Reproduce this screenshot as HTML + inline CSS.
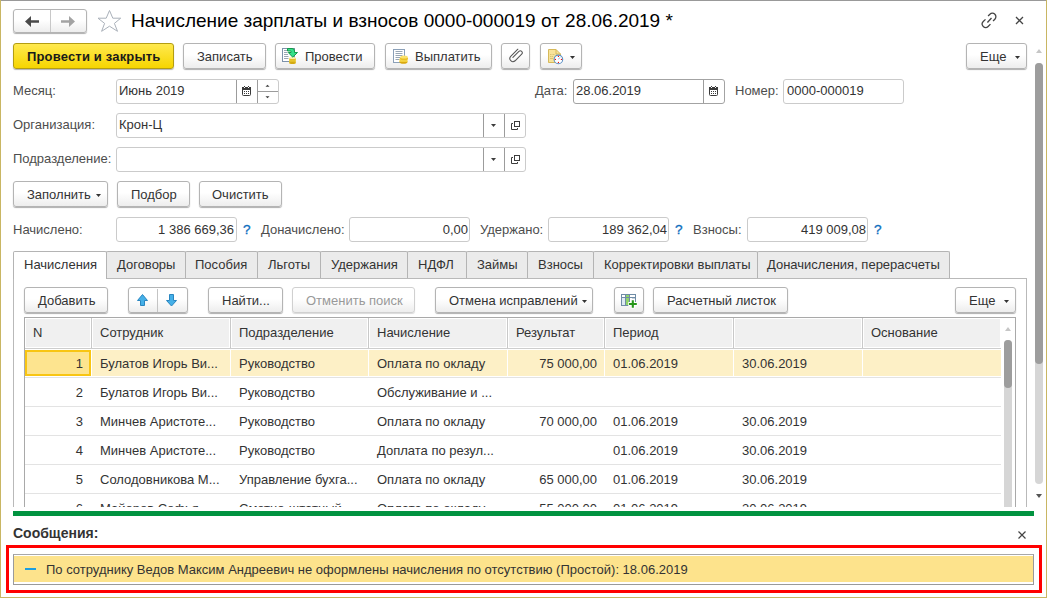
<!DOCTYPE html>
<html><head><meta charset="utf-8">
<style>
*{box-sizing:border-box}
html,body{margin:0;padding:0}
body{width:1047px;height:598px;position:relative;overflow:hidden;background:#fff;font-family:"Liberation Sans",sans-serif;font-size:13px;color:#4d4d4d}
.a{position:absolute}
svg.a{z-index:5}
.t{position:absolute;white-space:nowrap;line-height:15px}
.d{color:#333}
.btn{position:absolute;border:1px solid #b4b4b4;border-radius:3px;background:linear-gradient(#fff 0,#fff 45%,#ededed 100%);box-shadow:0 1px 1px rgba(0,0,0,.32)}
.fld{position:absolute;border:1px solid #cbcbcb;border-radius:3px;background:#fff;height:25px}
.vl{position:absolute;width:1px;background:#9c9c9c}
.tab{position:absolute;top:251px;height:27px;border:1px solid #b4b4b4;border-bottom:none;background:#ebebeb;border-radius:2px 2px 0 0}
.q{position:absolute;white-space:nowrap;line-height:15px;color:#0b6cbd;font-size:13.6px;-webkit-text-stroke:0.3px #0b6cbd}
.hd{position:absolute;top:318px;height:30px;width:1px;background:#cfcfcf;box-shadow:1px 0 0 #fff}
.rs{position:absolute;left:25px;width:976px;height:1px;background:#e3e3e3}
.r{text-align:right}
</style></head><body>
<!-- frame -->
<div class="a" style="left:0;top:0;width:1047px;height:1px;background:#999"></div>
<div class="a" style="left:0;top:0;width:1px;height:598px;background:#c9b663"></div>
<div class="a" style="left:1046px;top:0;width:1px;height:598px;background:#c9b663"></div>
<div class="a" style="left:0;top:597px;width:1047px;height:1px;background:#c9b663"></div>

<!-- nav buttons -->
<div class="btn" style="left:13px;top:9px;width:74px;height:24px"></div>
<div class="a" style="left:50px;top:10px;width:1px;height:22px;background:#c8c8c8"></div>
<svg class="a" style="left:0;top:0" width="130" height="40">
 <path d="M25 21.5 L31 16 L31 20.3 L39 20.3 L39 22.7 L31 22.7 L31 27 Z" fill="#4a4a4a"/>
 <path d="M75 21.5 L69 16 L69 20.3 L61 20.3 L61 22.7 L69 22.7 L69 27 Z" fill="#a3a3a3"/>
 <path d="M109.5 10.5 L112.8 18.2 L120.7 18.2 L114.4 23.4 L117.5 31.3 L109.5 26.2 L101.6 31.3 L104.6 23.4 L98 18.2 L106.2 18.2 Z" fill="none" stroke="#aab1ba" stroke-width="1"/>
</svg>
<div class="t" style="left:131px;top:10px;font-size:19px;line-height:22px;color:#000">Начисление зарплаты и взносов 0000-000019 от 28.06.2019 *</div>
<svg class="a" style="left:975px;top:8px" width="60" height="24">
 <g fill="none" stroke="#444" stroke-width="1.3">
  <path d="M13.08 8.07 L14.92 6.22 A3.5 3.5 0 0 1 19.87 11.17 L18.03 13.02"/>
  <path d="M10.49 11.34 L8.26 13.56 A3.45 3.45 0 0 0 13.14 18.44 L15.44 16.14"/>
  <path d="M16.5 10 L12.4 14.5"/>
  <path d="M41 9 L48 16 M48 9 L41 16"/>
 </g>
</svg>

<!-- main toolbar -->
<div class="a" style="left:13px;top:43px;width:161px;height:26px;border:1px solid #b39d12;border-radius:3px;background:linear-gradient(#ffe94f,#f6d500);box-shadow:0 1px 1px rgba(0,0,0,.3)"></div>
<div class="t" style="left:27px;top:49px;font-weight:bold;color:#1a1a1a;letter-spacing:0.17px">Провести и закрыть</div>
<div class="btn" style="left:183px;top:43px;width:83px;height:26px"></div>
<div class="t d" style="left:197px;top:49px">Записать</div>
<div class="btn" style="left:275px;top:43px;width:100px;height:26px"></div>
<div class="t d" style="left:305px;top:49px">Провести</div>
<div class="btn" style="left:385px;top:43px;width:107px;height:26px"></div>
<div class="t d" style="left:415px;top:49px">Выплатить</div>
<div class="btn" style="left:501px;top:43px;width:29px;height:26px"></div>
<div class="btn" style="left:540px;top:43px;width:42px;height:26px"></div>
<div class="btn" style="left:966px;top:43px;width:61px;height:26px"></div>
<div class="t d" style="left:980px;top:49px">Еще</div>
<svg class="a" style="left:0;top:0" width="1047" height="80">
 <!-- provesti icon -->
 <rect x="282.5" y="48.5" width="12" height="13" fill="#fff" stroke="#7d92aa"/>
 <path d="M284 50.5h3M284 52.5h3.5M284 54.5h4M284 56.5h4.5M284 58.5h4.5" stroke="#9aa6b4" stroke-width="1"/>
 <rect x="289.2" y="58" width="6.6" height="5" fill="#f1d03a"/>
 <ellipse cx="292.5" cy="63" rx="3.3" ry="1" fill="#d4aa14"/>
 <ellipse cx="292.5" cy="58" rx="3.3" ry="1.1" fill="#fdf1a6"/>
 <path d="M289.3 59.9h6.4M289.3 61.9h6.4" stroke="#cfa510" stroke-width=".7"/>
 <path d="M287.5 48.5 L292 48.5 Q294.5 48.5 294.5 51 L294.5 52.5 L297.5 52.5 L292.7 57.2 L288.3 52.5 L291 52.5 L291 51.5 Q291 51 290.5 51 L287.5 51 Z" fill="#36e08a" stroke="#169a4a" stroke-width="1" stroke-linejoin="round"/>
 <!-- vyplatit icon -->
 <rect x="393.5" y="49.5" width="11" height="13" fill="#fff" stroke="#8ba0b8"/>
 <path d="M395.5 51.5h7M395.5 53.5h7M395.5 55.5h7M395.5 57.5h5M395.5 59.5h4" stroke="#98a6b4" stroke-width="1"/>
 <ellipse cx="403.5" cy="62" rx="4" ry="1.8" fill="#d9a80f"/>
 <rect x="399.5" y="59" width="8" height="3" fill="#f2cf3a"/>
 <ellipse cx="403.5" cy="59" rx="4" ry="1.8" fill="#f7dc57"/>
 <ellipse cx="404" cy="58.5" rx="4" ry="1.8" fill="#e9bf22"/>
 <ellipse cx="404" cy="57" rx="3.8" ry="1.6" fill="#fbe26a"/>
 <!-- clip -->
 <path d="M517.85 49.23 L510.71 56.38 A3.1 3.1 0 0 0 515.09 60.76 L521.67 54.18 A1.95 1.95 0 0 0 518.91 51.42 L512.9 57.4" fill="none" stroke="#555" stroke-width="1.05" stroke-linecap="round"/>
 <!-- report icon -->
 <path d="M548.5 49.5 L556 49.5 L560.5 54 L560.5 62.5 L548.5 62.5 Z" fill="#f7e39a" stroke="#d6b95a"/>
 <path d="M556 49.5 L556 54 L560.5 54" fill="none" stroke="#d6b95a"/>
 <path d="M550 54.5h1.5M552.5 54.5h2M550 56.5h1M551.5 56.5h1.5M550 58.5h3" stroke="#d2bb6c" stroke-width=".8"/>
 <circle cx="558.4" cy="59.4" r="4.3" fill="#fff" stroke="#5b8fc4" stroke-width="1.1"/>
 <circle cx="558.4" cy="56.4" r=".6" fill="#e00"/><circle cx="558.4" cy="62.4" r=".6" fill="#e00"/>
 <circle cx="555.4" cy="59.4" r=".6" fill="#e00"/><circle cx="561.4" cy="59.4" r=".6" fill="#e00"/>
 <path d="M558.4 59.4 L560 57.4" stroke="#8fb3d8" stroke-width="1"/>
 <path d="M570 56 L575 56 L572.5 59 Z" fill="#333"/>
 <path d="M1015 56 L1020 56 L1017.5 59 Z" fill="#333"/>
</svg>

<!-- outer scrollbar -->
<div class="a" style="left:1035px;top:63px;width:8px;height:421px;border-radius:4px;background:#d6d6d6"></div>
<div class="a" style="left:1035px;top:63px;width:8px;height:301px;border-radius:4px;background:#9d9d9d"></div>
<svg class="a" style="left:1030px;top:45px" width="17" height="460">
 <path d="M6 8 L12 8 L9 4 Z" fill="#c6c6c6"/>
 <path d="M6 449 L12 449 L9 453 Z" fill="#555"/>
</svg>

<!-- fields row 1 -->
<div class="t" style="left:13px;top:83px">Месяц:</div>
<div class="fld" style="left:116px;top:79px;width:163px"></div>
<div class="vl" style="left:236px;top:80px;height:23px"></div>
<div class="vl" style="left:257px;top:80px;height:23px"></div>
<div class="a" style="left:257px;top:91px;width:21px;height:1px;background:#9c9c9c"></div>
<div class="t d" style="left:119px;top:83px">Июнь 2019</div>
<div class="t" style="left:535px;top:83px">Дата:</div>
<div class="fld" style="left:573px;top:79px;width:152px;border-color:#a3a3a3"></div>
<div class="vl" style="left:703px;top:80px;height:23px"></div>
<div class="t d" style="left:576px;top:83px">28.06.2019</div>
<div class="t" style="left:735px;top:83px">Номер:</div>
<div class="fld" style="left:783px;top:79px;width:121px"></div>
<div class="t d" style="left:787px;top:83px">0000-000019</div>
<svg class="a" style="left:0;top:0" width="1047" height="180">
 <!-- calendar icons -->
 <g id="cal" fill="#3a3a3a">
 <rect x="242.5" y="87.5" width="8" height="8" rx="1" fill="#fff" stroke="#3a3a3a" stroke-width="1"/>
 <rect x="242" y="87" width="9" height="3"/>
 <rect x="244" y="87" width="1" height="1" fill="#fff"/><rect x="248" y="87" width="1" height="1" fill="#fff"/>
 <rect x="244" y="86" width="1" height="1"/><rect x="248" y="86" width="1" height="1"/>
 <rect x="244" y="91" width="1" height="1"/><rect x="246" y="91" width="1" height="1"/><rect x="248" y="91" width="1" height="1"/>
 <rect x="244" y="93" width="1" height="1"/><rect x="246" y="93" width="1" height="1"/><rect x="248" y="93" width="1" height="1"/>
 </g>
 <use href="#cal" x="467" y="0"/>
 <path d="M265.5 86.8 L269.5 86.8 L267.5 84.8 Z" fill="#3c3c3c"/>
 <path d="M265.5 96.2 L269.5 96.2 L267.5 98.2 Z" fill="#3c3c3c"/>
 <!-- dropdown + open icons -->
 <path d="M491 124 L496 124 L493.5 127 Z" fill="#3c3c3c"/>
 <path d="M491 158 L496 158 L493.5 161 Z" fill="#3c3c3c"/>
 <g id="opn" fill="none" stroke="#3c3c3c" stroke-width="1">
  <rect x="514.5" y="121.5" width="5" height="5"/>
  <path d="M513 123.5 L511.5 123.5 L511.5 129.5 L517.5 129.5 L517.5 128"/>
 </g>
 <use href="#opn" x="0" y="34"/>
</svg>

<!-- row 2,3 -->
<div class="t" style="left:13px;top:117px">Организация:</div>
<div class="fld" style="left:116px;top:113px;width:410px"></div>
<div class="vl" style="left:483px;top:114px;height:23px"></div>
<div class="vl" style="left:504px;top:114px;height:23px"></div>
<div class="t d" style="left:119px;top:117px">Крон-Ц</div>
<div class="t" style="left:13px;top:151px">Подразделение:</div>
<div class="fld" style="left:116px;top:147px;width:410px"></div>
<div class="vl" style="left:483px;top:148px;height:23px"></div>
<div class="vl" style="left:504px;top:148px;height:23px"></div>

<!-- fill buttons -->
<div class="btn" style="left:13px;top:181px;width:95px;height:26px"></div>
<div class="t d" style="left:27px;top:187px">Заполнить</div>
<svg class="a" style="left:96px;top:194px" width="8" height="5"><path d="M0 0 L5 0 L2.5 3 Z" fill="#333"/></svg>
<div class="btn" style="left:117px;top:181px;width:73px;height:26px"></div>
<div class="t d" style="left:131px;top:187px">Подбор</div>
<div class="btn" style="left:199px;top:181px;width:83px;height:26px"></div>
<div class="t d" style="left:212px;top:187px">Очистить</div>

<!-- totals -->
<div class="t" style="left:13px;top:222px">Начислено:</div>
<div class="fld" style="left:116px;top:217px;width:121px"></div>
<div class="t d r" style="left:120px;top:222px;width:114px">1 386 669,36</div>
<div class="q" style="left:243px;top:222px">?</div>
<div class="t" style="left:261px;top:222px">Доначислено:</div>
<div class="fld" style="left:349px;top:217px;width:121px"></div>
<div class="t d r" style="left:353px;top:222px;width:115px">0,00</div>
<div class="t" style="left:480px;top:222px">Удержано:</div>
<div class="fld" style="left:548px;top:217px;width:121px"></div>
<div class="t d r" style="left:552px;top:222px;width:115px">189 362,04</div>
<div class="q" style="left:675px;top:222px">?</div>
<div class="t" style="left:693px;top:222px">Взносы:</div>
<div class="fld" style="left:747px;top:217px;width:121px"></div>
<div class="t d r" style="left:751px;top:222px;width:115px">419 009,08</div>
<div class="q" style="left:874px;top:222px">?</div>

<!-- tabs -->
<div class="a" style="left:13px;top:278px;width:1014px;height:229px;border:1px solid #b9b9b9;border-bottom:none"></div>
<div class="tab" style="left:106px;width:80px"></div>
<div class="tab" style="left:185px;width:73px"></div>
<div class="tab" style="left:257px;width:64px"></div>
<div class="tab" style="left:320px;width:88px"></div>
<div class="tab" style="left:407px;width:60px"></div>
<div class="tab" style="left:466px;width:62px"></div>
<div class="tab" style="left:527px;width:67px"></div>
<div class="tab" style="left:593px;width:165px"></div>
<div class="tab" style="left:757px;width:193px"></div>
<div class="a" style="left:13px;top:251px;width:94px;height:28px;border:1px solid #b4b4b4;border-bottom:none;border-radius:2px 2px 0 0;background:#fff"></div>
<div class="t d" style="left:24px;top:257px">Начисления</div>
<div class="t d" style="left:117px;top:257px">Договоры</div>
<div class="t d" style="left:195px;top:257px">Пособия</div>
<div class="t d" style="left:268px;top:257px">Льготы</div>
<div class="t d" style="left:331px;top:257px">Удержания</div>
<div class="t d" style="left:418px;top:257px">НДФЛ</div>
<div class="t d" style="left:477px;top:257px">Займы</div>
<div class="t d" style="left:538px;top:257px">Взносы</div>
<div class="t d" style="left:604px;top:257px">Корректировки выплаты</div>
<div class="t d" style="left:767px;top:257px">Доначисления, перерасчеты</div>

<!-- table toolbar -->
<div class="btn" style="left:24px;top:287px;width:84px;height:26px"></div>
<div class="t d" style="left:38px;top:293px">Добавить</div>
<div class="btn" style="left:128px;top:287px;width:60px;height:26px"></div>
<div class="a" style="left:157px;top:289px;width:1px;height:23px;background:#c4c4c4"></div>
<div class="btn" style="left:208px;top:287px;width:75px;height:26px"></div>
<div class="t d" style="left:222px;top:293px">Найти...</div>
<div class="btn" style="left:292px;top:287px;width:123px;height:26px;border-color:#d0d0d0;box-shadow:0 1px 1px rgba(0,0,0,.15)"></div>
<div class="t" style="left:306px;top:293px;color:#999">Отменить поиск</div>
<div class="btn" style="left:435px;top:287px;width:158px;height:26px"></div>
<div class="t d" style="left:449px;top:293px">Отмена исправлений</div>
<div class="btn" style="left:614px;top:287px;width:30px;height:26px"></div>
<div class="btn" style="left:653px;top:287px;width:135px;height:26px"></div>
<div class="t d" style="left:667px;top:293px">Расчетный листок</div>
<div class="btn" style="left:955px;top:287px;width:61px;height:26px"></div>
<div class="t d" style="left:969px;top:293px">Еще</div>
<svg class="a" style="left:0;top:280px" width="1047" height="40">
 <path d="M137.5 20.5 L142.5 14.5 L147.5 20.5 L144.5 20.5 L144.5 25.5 L140.5 25.5 L140.5 20.5 Z" fill="#45b0e8" stroke="#2a86c0" stroke-width="1"/>
 <path d="M166.5 20.5 L171.5 26 L176.5 20.5 L173.5 20.5 L173.5 14.5 L169.5 14.5 L169.5 20.5 Z" fill="#45b0e8" stroke="#2a86c0" stroke-width="1"/>
 <path d="M582 20 L587 20 L584.5 23 Z" fill="#333"/>
 <path d="M1004 20 L1009 20 L1006.5 23 Z" fill="#333"/>
 <!-- table add icon -->
 <rect x="621.5" y="14.5" width="14" height="11" fill="#fff" stroke="#6f8ca6"/>
 <rect x="622" y="18" width="3" height="7" fill="#dde9f3"/>
 <rect x="626" y="15" width="3" height="10" fill="#8fd46a"/>
 <path d="M622 17.5h13M625.5 15v10M629.5 15v10" stroke="#6f8ca6"/>
 <path d="M632 18.5h3" stroke="#c8d4de"/>
 <path d="M628.3 24h9M632.8 19.5v9" stroke="#fff" stroke-width="4"/>
 <path d="M629 24h7.8M632.8 20.2v7.6" stroke="#25961a" stroke-width="2.1"/>
</svg>

<!-- table -->
<div class="a" style="left:24px;top:317px;width:992px;height:190px;border:1px solid #a9a9a9;border-bottom:none"></div>
<div class="a" style="left:25px;top:318px;width:976px;height:30px;background:#f0f0f0;box-shadow:inset 0 0 0 1px #fff"></div>
<div class="a" style="left:1000px;top:318px;width:1px;height:30px;background:#fff"></div>
<div class="a" style="left:90px;top:318px;width:3px;height:30px;background:#c9c9c9;border-left:1px solid #fff;border-right:1px solid #fff"></div>
<div class="a" style="left:229px;top:318px;width:3px;height:30px;background:#c9c9c9;border-left:1px solid #fff;border-right:1px solid #fff"></div>
<div class="a" style="left:367px;top:318px;width:3px;height:30px;background:#c9c9c9;border-left:1px solid #fff;border-right:1px solid #fff"></div>
<div class="a" style="left:506px;top:318px;width:3px;height:30px;background:#c9c9c9;border-left:1px solid #fff;border-right:1px solid #fff"></div>
<div class="a" style="left:603px;top:318px;width:3px;height:30px;background:#c9c9c9;border-left:1px solid #fff;border-right:1px solid #fff"></div>
<div class="a" style="left:732px;top:318px;width:3px;height:30px;background:#c9c9c9;border-left:1px solid #fff;border-right:1px solid #fff"></div>
<div class="a" style="left:861px;top:318px;width:3px;height:30px;background:#c9c9c9;border-left:1px solid #fff;border-right:1px solid #fff"></div>
<div class="a" style="left:25px;top:348px;width:976px;height:1px;background:#cdcdcd"></div>
<div class="t d" style="left:33px;top:325px">N</div>
<div class="t d" style="left:100px;top:325px">Сотрудник</div>
<div class="t d" style="left:239px;top:325px">Подразделение</div>
<div class="t d" style="left:377px;top:325px">Начисление</div>
<div class="t d" style="left:516px;top:325px">Результат</div>
<div class="t d" style="left:613px;top:325px">Период</div>
<div class="t d" style="left:871px;top:325px">Основание</div>

<!-- row 1 highlighted -->
<div class="a" style="left:25px;top:350px;width:976px;height:26px;background:#fdf0c6"></div>
<div class="a" style="left:91px;top:350px;width:1px;height:26px;background:#fff"></div>
<div class="a" style="left:230px;top:350px;width:1px;height:26px;background:#fff"></div>
<div class="a" style="left:368px;top:350px;width:1px;height:26px;background:#fff"></div>
<div class="a" style="left:507px;top:350px;width:1px;height:26px;background:#fff"></div>
<div class="a" style="left:604px;top:350px;width:1px;height:26px;background:#fff"></div>
<div class="a" style="left:733px;top:350px;width:1px;height:26px;background:#fff"></div>
<div class="a" style="left:862px;top:350px;width:1px;height:26px;background:#fff"></div>
<div class="a" style="left:25px;top:350px;width:66px;height:26px;border:2px solid #f8c513;background:#fde48f"></div>
<div class="rs" style="top:377px"></div>
<div class="rs" style="top:406px"></div>
<div class="rs" style="top:435px"></div>
<div class="rs" style="top:464px"></div>
<div class="rs" style="top:493px"></div>

<div class="t d r" style="left:30px;top:356px;width:53px">1</div>
<div class="t d" style="left:100px;top:356px">Булатов Игорь Ви...</div>
<div class="t d" style="left:239px;top:356px">Руководство</div>
<div class="t d" style="left:377px;top:356px">Оплата по окладу</div>
<div class="t d r" style="left:510px;top:356px;width:87px">75 000,00</div>
<div class="t d" style="left:613px;top:356px">01.06.2019</div>
<div class="t d" style="left:742px;top:356px">30.06.2019</div>

<div class="t d r" style="left:30px;top:385px;width:53px">2</div>
<div class="t d" style="left:100px;top:385px">Булатов Игорь Ви...</div>
<div class="t d" style="left:239px;top:385px">Руководство</div>
<div class="t d" style="left:377px;top:385px">Обслуживание и ...</div>

<div class="t d r" style="left:30px;top:414px;width:53px">3</div>
<div class="t d" style="left:100px;top:414px">Минчев Аристоте...</div>
<div class="t d" style="left:239px;top:414px">Руководство</div>
<div class="t d" style="left:377px;top:414px">Оплата по окладу</div>
<div class="t d r" style="left:510px;top:414px;width:87px">70 000,00</div>
<div class="t d" style="left:613px;top:414px">01.06.2019</div>
<div class="t d" style="left:742px;top:414px">30.06.2019</div>

<div class="t d r" style="left:30px;top:443px;width:53px">4</div>
<div class="t d" style="left:100px;top:443px">Минчев Аристоте...</div>
<div class="t d" style="left:239px;top:443px">Руководство</div>
<div class="t d" style="left:377px;top:443px">Доплата по резул...</div>
<div class="t d" style="left:613px;top:443px">01.06.2019</div>
<div class="t d" style="left:742px;top:443px">30.06.2019</div>

<div class="t d r" style="left:30px;top:472px;width:53px">5</div>
<div class="t d" style="left:100px;top:472px">Солодовникова М...</div>
<div class="t d" style="left:239px;top:472px">Управление бухга...</div>
<div class="t d" style="left:377px;top:472px">Оплата по окладу</div>
<div class="t d r" style="left:510px;top:472px;width:87px">65 000,00</div>
<div class="t d" style="left:613px;top:472px">01.06.2019</div>
<div class="t d" style="left:742px;top:472px">30.06.2019</div>

<div class="a" style="left:26px;top:494px;width:974px;height:13px;overflow:hidden">
 <div class="t d r" style="left:4px;top:7px;width:53px">6</div>
 <div class="t d" style="left:74px;top:7px">Майоров Софья ...</div>
 <div class="t d" style="left:213px;top:7px">Сметно-штатный ...</div>
 <div class="t d" style="left:351px;top:7px">Оплата по окладу</div>
 <div class="t d r" style="left:484px;top:7px;width:87px">55 000,00</div>
 <div class="t d" style="left:587px;top:7px">01.06.2019</div>
 <div class="t d" style="left:716px;top:7px">30.06.2019</div>
</div>

<!-- table scrollbar -->
<div class="a" style="left:1004px;top:340px;width:8px;height:167px;background:#d6d6d6;border-radius:4px 4px 0 0"></div>
<div class="a" style="left:1004px;top:340px;width:8px;height:48px;border-radius:4px;background:#9d9d9d"></div>
<svg class="a" style="left:1000px;top:320px" width="16" height="16"><path d="M5 11 L11 11 L8 7 Z" fill="#c6c6c6"/></svg>

<!-- green bar -->
<div class="a" style="left:13px;top:511px;width:1021px;height:5px;background:#019340"></div>

<!-- messages -->
<div class="t" style="left:13px;top:526px;font-weight:bold;color:#333;font-size:14px">Сообщения:</div>
<svg class="a" style="left:1010px;top:525px" width="20" height="20"><path d="M8.5 6.5 L15.5 13.5 M15.5 6.5 L8.5 13.5" stroke="#444" stroke-width="1.2"/></svg>
<div class="a" style="left:6px;top:545px;width:1036px;height:48px;border:3px solid #f00"></div>
<div class="a" style="left:13px;top:554px;width:1021px;height:31px;border:1px solid #9a9a9a;border-top-color:#a8a8a8;background:#fde38c;box-shadow:inset 0 1px 0 #fff,inset 0 -2px 0 #fff"></div>
<div class="a" style="left:25px;top:568px;width:11px;height:2px;background:#1c9ee0"></div>
<div class="t d" style="left:46px;top:562px">По сотруднику Ведов Максим Андреевич не оформлены начисления по отсутствию (Простой): 18.06.2019</div>
</body></html>
